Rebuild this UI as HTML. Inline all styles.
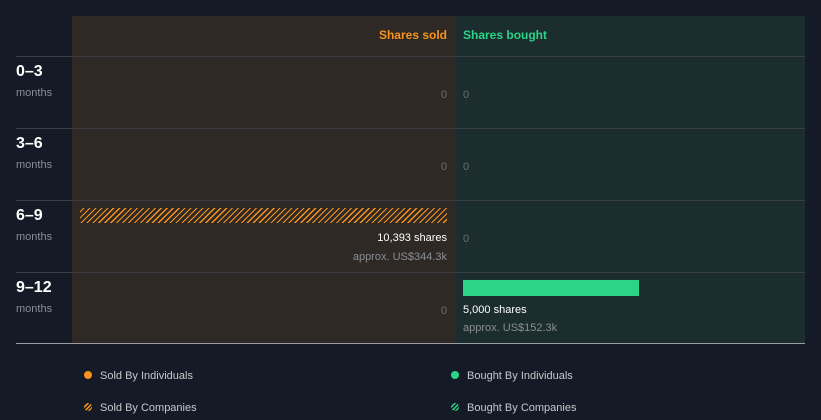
<!DOCTYPE html><html><head><style>
body{margin:0;width:821px;height:420px;background:#151b26;font-family:"Liberation Sans",sans-serif;position:relative;overflow:hidden}
div,span{position:absolute}
.sold{left:72px;top:16px;width:383px;height:327px;background:#2e2924}
.bought{left:455px;top:16px;width:350px;height:327px;background:#1b2d2e}
.ln{left:16px;width:789px;height:1px;background:#3b3f45}
.rl{left:16px;font-size:16px;font-weight:bold;color:#fff}
.mo{left:16px;font-size:11px;color:#8a8e94}
.z{font-size:11px;color:#6b6f73}
.zs{right:374px;text-align:right}
.zb{left:463px}
.w{font-size:11px;color:#fff}
.g{font-size:11px;color:#8a8e94}
.lg{font-size:11px;color:#c6c8cb}
</style></head><body>
<div class="sold"></div><div class="bought"></div>
<span style="right:374px;top:28px;font-size:12px;font-weight:bold;color:#f7931e">Shares sold</span>
<span style="left:463px;top:28px;font-size:12px;font-weight:bold;color:#2bd487">Shares bought</span>
<div class="ln" style="top:56px"></div><div class="ln" style="top:128px"></div><div class="ln" style="top:200px"></div><div class="ln" style="top:272px"></div>
<div class="ln" style="top:343px;background:#9a9ea3"></div>
<span class="rl" style="top:63px">0–3</span><span class="mo" style="top:87px">months</span>
<span class="rl" style="top:135px">3–6</span><span class="mo" style="top:159px">months</span>
<span class="rl" style="top:207px">6–9</span><span class="mo" style="top:231px">months</span>
<span class="rl" style="top:279px">9–12</span><span class="mo" style="top:303px">months</span>
<span class="z zs" style="top:89px">0</span><span class="z zb" style="top:89px">0</span>
<span class="z zs" style="top:161px">0</span><span class="z zb" style="top:161px">0</span>
<span class="z zb" style="top:233px">0</span><span class="z zs" style="top:305px">0</span>
<div style="left:80px;top:208px;width:367px;height:15px;background:repeating-linear-gradient(-45deg,#2e2924 0 2px,#f7931e 2px 3.2px,#2e2924 3.2px 4.2px)"></div>
<span class="w" style="right:374px;top:232px">10,393 shares</span>
<span class="g" style="right:374px;top:251px">approx. US$344.3k</span>
<div style="left:463px;top:280px;width:176px;height:16px;background:#2bd487"></div>
<span class="w" style="left:463px;top:304px">5,000 shares</span>
<span class="g" style="left:463px;top:322px">approx. US$152.3k</span>
<div style="left:84px;top:371px;width:8px;height:8px;border-radius:50%;background:#f7931e"></div>
<span class="lg" style="left:100px;top:370px">Sold By Individuals</span>
<div style="left:84px;top:403px;width:8px;height:8px;border-radius:50%;background:repeating-linear-gradient(-45deg,#2e2924 0 1.5px,#f7931e 1.5px 3px)"></div>
<span class="lg" style="left:100px;top:402px">Sold By Companies</span>
<div style="left:451px;top:371px;width:8px;height:8px;border-radius:50%;background:#2bd487"></div>
<span class="lg" style="left:467px;top:370px">Bought By Individuals</span>
<div style="left:451px;top:403px;width:8px;height:8px;border-radius:50%;background:repeating-linear-gradient(-45deg,#1b2d2e 0 1.5px,#2bd487 1.5px 3px)"></div>
<span class="lg" style="left:467px;top:402px">Bought By Companies</span>
</body></html>
